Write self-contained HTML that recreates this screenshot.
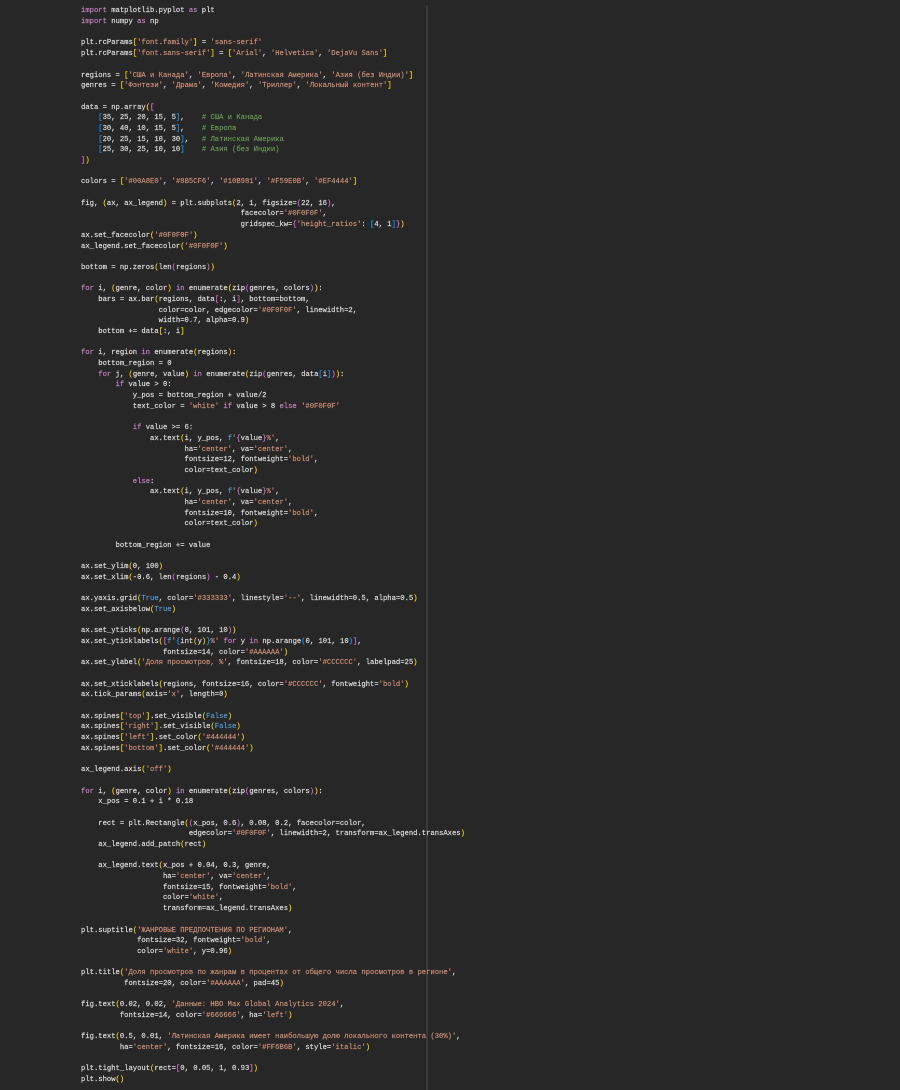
<!DOCTYPE html>
<html><head><meta charset="utf-8"><style>
html,body{margin:0;padding:0;background:#272727;width:900px;height:1090px;overflow:hidden}
pre{position:absolute;left:81px;top:6.4px;margin:0;font-family:"Liberation Mono",monospace;font-size:7.2px;line-height:10.69px;color:#e0e0e0;white-space:pre;-webkit-text-stroke:0.15px currentColor}
.vl{position:absolute;left:426px;top:5px;width:2px;height:1085px;background:#3a3a3a}
.k{color:#c586c0}.s{color:#ce9178}.c{color:#6a9955}.b{color:#569cd6}.y{color:#ffd700}.p{color:#da70d6}.u{color:#179fff}
</style></head><body>
<div class="vl"></div>
<pre><span class="k">import</span> matplotlib.pyplot <span class="k">as</span> plt
<span class="k">import</span> numpy <span class="k">as</span> np

plt.rcParams<span class="y">[</span><span class="s">'font.family'</span><span class="y">]</span> = <span class="s">'sans-serif'</span>
plt.rcParams<span class="y">[</span><span class="s">'font.sans-serif'</span><span class="y">]</span> = <span class="y">[</span><span class="s">'Arial'</span>, <span class="s">'Helvetica'</span>, <span class="s">'DejaVu Sans'</span><span class="y">]</span>

regions = <span class="y">[</span><span class="s">'США и Канада'</span>, <span class="s">'Европа'</span>, <span class="s">'Латинская Америка'</span>, <span class="s">'Азия (без Индии)'</span><span class="y">]</span>
genres = <span class="y">[</span><span class="s">'Фэнтези'</span>, <span class="s">'Драма'</span>, <span class="s">'Комедия'</span>, <span class="s">'Триллер'</span>, <span class="s">'Локальный контент'</span><span class="y">]</span>

data = np.array<span class="y">(</span><span class="p">[</span>
    <span class="u">[</span>35, 25, 20, 15, 5<span class="u">]</span>,    <span class="c"># США и Канада</span>
    <span class="u">[</span>30, 40, 10, 15, 5<span class="u">]</span>,    <span class="c"># Европа</span>
    <span class="u">[</span>20, 25, 15, 10, 30<span class="u">]</span>,   <span class="c"># Латинская Америка</span>
    <span class="u">[</span>25, 30, 25, 10, 10<span class="u">]</span>    <span class="c"># Азия (без Индии)</span>
<span class="p">]</span><span class="y">)</span>

colors = <span class="y">[</span><span class="s">'#00A8E0'</span>, <span class="s">'#8B5CF6'</span>, <span class="s">'#10B981'</span>, <span class="s">'#F59E0B'</span>, <span class="s">'#EF4444'</span><span class="y">]</span>

fig, <span class="y">(</span>ax, ax_legend<span class="y">)</span> = plt.subplots<span class="y">(</span>2, 1, figsize=<span class="p">(</span>22, 16<span class="p">)</span>,
                                     facecolor=<span class="s">'#0F0F0F'</span>,
                                     gridspec_kw=<span class="p">{</span><span class="s">'height_ratios'</span>: <span class="u">[</span>4, 1<span class="u">]</span><span class="p">}</span><span class="y">)</span>
ax.set_facecolor<span class="y">(</span><span class="s">'#0F0F0F'</span><span class="y">)</span>
ax_legend.set_facecolor<span class="y">(</span><span class="s">'#0F0F0F'</span><span class="y">)</span>

bottom = np.zeros<span class="y">(</span>len<span class="p">(</span>regions<span class="p">)</span><span class="y">)</span>

<span class="k">for</span> i, <span class="y">(</span>genre, color<span class="y">)</span> <span class="k">in</span> enumerate<span class="y">(</span>zip<span class="p">(</span>genres, colors<span class="p">)</span><span class="y">)</span>:
    bars = ax.bar<span class="y">(</span>regions, data<span class="p">[</span>:, i<span class="p">]</span>, bottom=bottom,
                  color=color, edgecolor=<span class="s">'#0F0F0F'</span>, linewidth=2,
                  width=0.7, alpha=0.9<span class="y">)</span>
    bottom += data<span class="y">[</span>:, i<span class="y">]</span>

<span class="k">for</span> i, region <span class="k">in</span> enumerate<span class="y">(</span>regions<span class="y">)</span>:
    bottom_region = 0
    <span class="k">for</span> j, <span class="y">(</span>genre, value<span class="y">)</span> <span class="k">in</span> enumerate<span class="y">(</span>zip<span class="p">(</span>genres, data<span class="u">[</span>i<span class="u">]</span><span class="p">)</span><span class="y">)</span>:
        <span class="k">if</span> value &gt; 0:
            y_pos = bottom_region + value/2
            text_color = <span class="s">'white'</span> <span class="k">if</span> value &gt; 8 <span class="k">else</span> <span class="s">'#0F0F0F'</span>

            <span class="k">if</span> value &gt;= 6:
                ax.text<span class="y">(</span>i, y_pos, <span class="b">f</span><span class="s">'</span><span class="p">{</span>value<span class="p">}</span><span class="s">%'</span>,
                        ha=<span class="s">'center'</span>, va=<span class="s">'center'</span>,
                        fontsize=12, fontweight=<span class="s">'bold'</span>,
                        color=text_color<span class="y">)</span>
            <span class="k">else</span>:
                ax.text<span class="y">(</span>i, y_pos, <span class="b">f</span><span class="s">'</span><span class="p">{</span>value<span class="p">}</span><span class="s">%'</span>,
                        ha=<span class="s">'center'</span>, va=<span class="s">'center'</span>,
                        fontsize=10, fontweight=<span class="s">'bold'</span>,
                        color=text_color<span class="y">)</span>

        bottom_region += value

ax.set_ylim<span class="y">(</span>0, 100<span class="y">)</span>
ax.set_xlim<span class="y">(</span>-0.6, len<span class="p">(</span>regions<span class="p">)</span> - 0.4<span class="y">)</span>

ax.yaxis.grid<span class="y">(</span><span class="b">True</span>, color=<span class="s">'#333333'</span>, linestyle=<span class="s">'--'</span>, linewidth=0.5, alpha=0.5<span class="y">)</span>
ax.set_axisbelow<span class="y">(</span><span class="b">True</span><span class="y">)</span>

ax.set_yticks<span class="y">(</span>np.arange<span class="p">(</span>0, 101, 10<span class="p">)</span><span class="y">)</span>
ax.set_yticklabels<span class="y">(</span><span class="p">[</span><span class="b">f</span><span class="s">'</span><span class="u">{</span>int<span class="y">(</span>y<span class="y">)</span><span class="u">}</span><span class="s">%'</span> <span class="k">for</span> y <span class="k">in</span> np.arange<span class="u">(</span>0, 101, 10<span class="u">)</span><span class="p">]</span>,
                   fontsize=14, color=<span class="s">'#AAAAAA'</span><span class="y">)</span>
ax.set_ylabel<span class="y">(</span><span class="s">'Доля просмотров, %'</span>, fontsize=18, color=<span class="s">'#CCCCCC'</span>, labelpad=25<span class="y">)</span>

ax.set_xticklabels<span class="y">(</span>regions, fontsize=16, color=<span class="s">'#CCCCCC'</span>, fontweight=<span class="s">'bold'</span><span class="y">)</span>
ax.tick_params<span class="y">(</span>axis=<span class="s">'x'</span>, length=0<span class="y">)</span>

ax.spines<span class="y">[</span><span class="s">'top'</span><span class="y">]</span>.set_visible<span class="y">(</span><span class="b">False</span><span class="y">)</span>
ax.spines<span class="y">[</span><span class="s">'right'</span><span class="y">]</span>.set_visible<span class="y">(</span><span class="b">False</span><span class="y">)</span>
ax.spines<span class="y">[</span><span class="s">'left'</span><span class="y">]</span>.set_color<span class="y">(</span><span class="s">'#444444'</span><span class="y">)</span>
ax.spines<span class="y">[</span><span class="s">'bottom'</span><span class="y">]</span>.set_color<span class="y">(</span><span class="s">'#444444'</span><span class="y">)</span>

ax_legend.axis<span class="y">(</span><span class="s">'off'</span><span class="y">)</span>

<span class="k">for</span> i, <span class="y">(</span>genre, color<span class="y">)</span> <span class="k">in</span> enumerate<span class="y">(</span>zip<span class="p">(</span>genres, colors<span class="p">)</span><span class="y">)</span>:
    x_pos = 0.1 + i * 0.18

    rect = plt.Rectangle<span class="y">(</span><span class="p">(</span>x_pos, 0.6<span class="p">)</span>, 0.08, 0.2, facecolor=color,
                         edgecolor=<span class="s">'#0F0F0F'</span>, linewidth=2, transform=ax_legend.transAxes<span class="y">)</span>
    ax_legend.add_patch<span class="y">(</span>rect<span class="y">)</span>

    ax_legend.text<span class="y">(</span>x_pos + 0.04, 0.3, genre,
                   ha=<span class="s">'center'</span>, va=<span class="s">'center'</span>,
                   fontsize=15, fontweight=<span class="s">'bold'</span>,
                   color=<span class="s">'white'</span>,
                   transform=ax_legend.transAxes<span class="y">)</span>

plt.suptitle<span class="y">(</span><span class="s">'ЖАНРОВЫЕ ПРЕДПОЧТЕНИЯ ПО РЕГИОНАМ'</span>,
             fontsize=32, fontweight=<span class="s">'bold'</span>,
             color=<span class="s">'white'</span>, y=0.96<span class="y">)</span>

plt.title<span class="y">(</span><span class="s">'Доля просмотров по жанрам в процентах от общего числа просмотров в регионе'</span>,
          fontsize=20, color=<span class="s">'#AAAAAA'</span>, pad=45<span class="y">)</span>

fig.text<span class="y">(</span>0.02, 0.02, <span class="s">'Данные: HBO Max Global Analytics 2024'</span>,
         fontsize=14, color=<span class="s">'#666666'</span>, ha=<span class="s">'left'</span><span class="y">)</span>

fig.text<span class="y">(</span>0.5, 0.01, <span class="s">'Латинская Америка имеет наибольшую долю локального контента (30%)'</span>,
         ha=<span class="s">'center'</span>, fontsize=16, color=<span class="s">'#FF6B6B'</span>, style=<span class="s">'italic'</span><span class="y">)</span>

plt.tight_layout<span class="y">(</span>rect=<span class="p">[</span>0, 0.05, 1, 0.93<span class="p">]</span><span class="y">)</span>
plt.show<span class="y">()</span></pre>
</body></html>
